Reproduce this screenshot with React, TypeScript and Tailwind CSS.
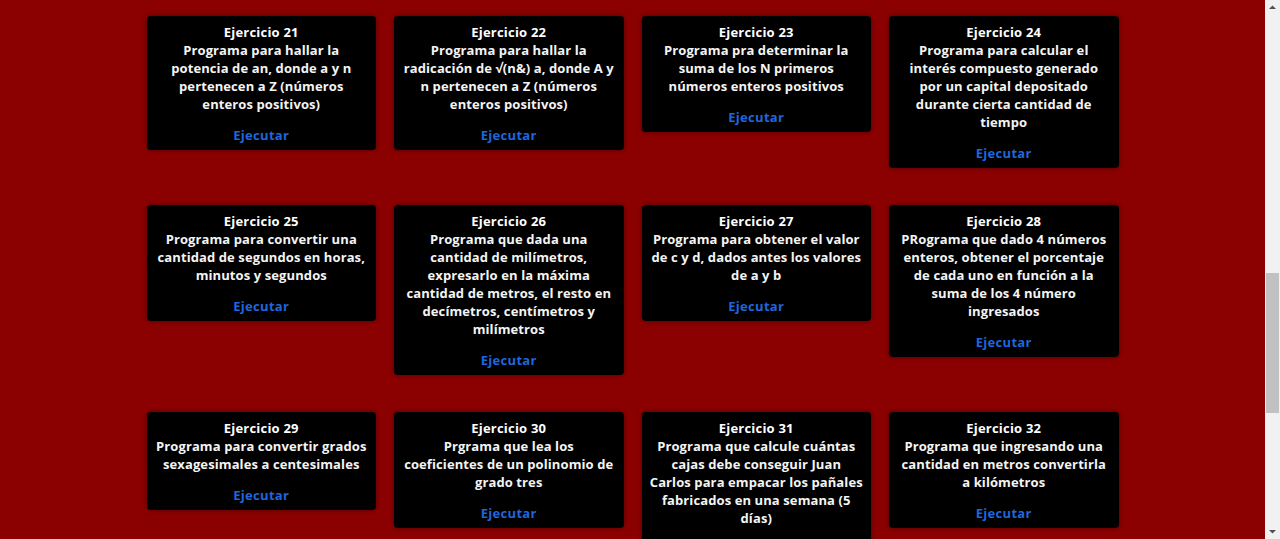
const ejercicios = [
  { n: 21, lines: ["Programa para hallar la", "potencia de an, donde a y n", "pertenecen a Z (números", "enteros positivos)"] },
  { n: 22, lines: ["Programa para hallar la", "radicación de √(n&) a, donde A y", "n pertenecen a Z (números", "enteros positivos)"] },
  { n: 23, lines: ["Programa pra determinar la", "suma de los N primeros", "números enteros positivos"] },
  { n: 24, lines: ["Programa para calcular el", "interés compuesto generado", "por un capital depositado", "durante cierta cantidad de", "tiempo"] },
  { n: 25, lines: ["Programa para convertir una", "cantidad de segundos en horas,", "minutos y segundos"] },
  { n: 26, lines: ["Programa que dada una", "cantidad de milímetros,", "expresarlo en la máxima", "cantidad de metros, el resto en", "decímetros, centímetros y", "milímetros"] },
  { n: 27, lines: ["Programa para obtener el valor", "de c y d, dados antes los valores", "de a y b"] },
  { n: 28, lines: ["PRograma que dado 4 números", "enteros, obtener el porcentaje", "de cada uno en función a la", "suma de los 4 número", "ingresados"] },
  { n: 29, lines: ["Programa para convertir grados", "sexagesimales a centesimales"] },
  { n: 30, lines: ["Prgrama que lea los", "coeficientes de un polinomio de", "grado tres"] },
  { n: 31, lines: ["Programa que calcule cuántas", "cajas debe conseguir Juan", "Carlos para empacar los pañales", "fabricados en una semana (5", "días)"] },
  { n: 32, lines: ["Programa que ingresando una", "cantidad en metros convertirla", "a kilómetros"] },
];

function Card({ n, lines }: { n: number; lines: string[] }) {
  return (
    <div className="rounded-[4px] bg-black px-[6px] pt-[7px] pb-[6px] text-center shadow-[0_0_4px_rgba(0,0,0,0.45)]">
      <h3 className="text-[13px] font-bold leading-[18px] tracking-[0.2px] text-white">Ejercicio {n}</h3>
      <p className="text-[13px] font-bold leading-[18px] tracking-[0.1px] text-[#f4f4f4]">
        {lines.map((l) => (
          <span key={l} className="block whitespace-nowrap">
            {l}
          </span>
        ))}
      </p>
      <a href="#" className="mt-[13px] block text-[13px] font-bold leading-[18px] tracking-[0.3px] text-[#1f66dd]">
        Ejecutar
      </a>
    </div>
  );
}

export default function App() {
  return (
    <div className="flex h-[539px] overflow-hidden bg-[#8b0000] font-['Open_Sans',sans-serif]">
      <main className="flex-1 overflow-hidden pt-4">
        <div className="mx-auto grid w-[972px] grid-cols-4 items-start gap-x-[18px] gap-y-[37px]">
          {ejercicios.map((e) => (
            <Card key={e.n} n={e.n} lines={e.lines} />
          ))}
        </div>
      </main>
      <div className="flex w-[15px] flex-col items-center bg-[#f1f1f1]">
        <svg width="15" height="15" viewBox="0 0 15 15" className="shrink-0">
          <path d="M4 9 L7.5 5.5 L11 9 Z" fill="#505050" />
        </svg>
        <div className="mt-[258px] h-[140px] w-[13px] bg-[#c1c1c1]" />
        <div className="flex-1" />
        <svg width="15" height="15" viewBox="0 0 15 15" className="shrink-0">
          <path d="M4 6 L7.5 9.5 L11 6 Z" fill="#505050" />
        </svg>
      </div>
    </div>
  );
}
